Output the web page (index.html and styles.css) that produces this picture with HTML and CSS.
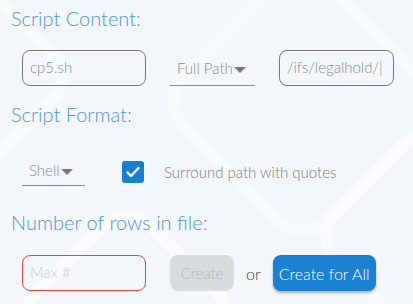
FILE: index.html
```html
<!DOCTYPE html>
<html lang="en">
<head>
    <meta charset="UTF-8">
    <title>Script Options</title>
    <link rel="stylesheet" href="styles.css">
</head>
<body>
    <div class="bg">
        <div class="shape shape-a"></div>
        <div class="shape shape-b"></div>
        <div class="shape shape-c"></div>
        <div class="shape shape-d"></div>
    </div>

    <div class="panel">
        <h2 class="title">Script Content:</h2>
        <div class="row">
            <div class="field">cp5.sh</div>
            <div class="select select-wide">Full Path<span class="caret"></span></div>
            <div class="field field-path">/ifs/legalhold/|</div>
        </div>

        <h2 class="title">Script Format:</h2>
        <div class="row row-format">
            <div class="select select-small">Shell<span class="caret"></span></div>
            <label class="check">
                <span class="box">
                    <svg width="14" height="12" viewBox="0 0 14 12"><path d="M1.5 6.5 L5 10 L12.5 2" fill="none" stroke="#fff" stroke-width="2.2" stroke-linecap="round" stroke-linejoin="round"/></svg>
                </span>
                Surround path with quotes
            </label>
        </div>

        <h2 class="title">Number of rows in file:</h2>
        <div class="row row-rows">
            <div class="field field-error placeholder">Max #</div>
            <button class="btn btn-disabled">Create</button>
            <span class="or">or</span>
            <button class="btn btn-primary">Create for All</button>
        </div>
    </div>
</body>
</html>
```

FILE: styles.css
```css
body {
    margin: 0;
    width: 413px;
    height: 304px;
    overflow: hidden;
    background: #f3f7fb;
    font-family: Lato, "Open Sans", sans-serif;
    position: relative;
}

/* decorative background */
.bg {
    position: absolute;
    inset: 0;
    overflow: hidden;
}
.shape {
    position: absolute;
    border-radius: 40px;
    transform: rotate(45deg);
    border: 12px solid rgba(255, 255, 255, 0.45);
}
.shape-a {
    width: 170px;
    height: 170px;
    left: -150px;
    top: -20px;
}
.shape-b {
    width: 190px;
    height: 190px;
    left: 195px;
    top: -5px;
    border-color: rgba(255, 255, 255, 0.35);
}
.shape-c {
    width: 150px;
    height: 150px;
    left: 40px;
    top: 230px;
    border-color: rgba(255, 255, 255, 0.5);
}
.shape-d {
    width: 150px;
    height: 150px;
    left: 340px;
    top: 150px;
    border-color: rgba(255, 255, 255, 0.35);
}

.panel {
    position: relative;
    padding: 6px 0 0 11px;
}

.title {
    margin: 0;
    font-size: 20px;
    font-weight: 300;
    line-height: 24px;
    color: #4d94d3;
}

.row {
    display: flex;
    align-items: center;
    padding-left: 11px;
    margin: 20px 0 16px;
    height: 36px;
}

.field {
    box-sizing: border-box;
    width: 124px;
    height: 36px;
    border: 1px solid #7a7a7a;
    border-radius: 8px;
    padding: 0 7px;
    font-size: 15px;
    line-height: 33px;
    color: #8a8a8a;
    font-weight: 300;
    white-space: nowrap;
    overflow: hidden;
    background: transparent;
}
.field-path {
    width: 115px;
    margin-left: 24px;
}
.field-error {
    border-color: #e2463a;
}
.placeholder {
    color: #cacaca;
}

.select {
    box-sizing: border-box;
    height: 36px;
    border-bottom: 1px solid #8a8a8a;
    padding: 0 0 0 7px;
    font-size: 15px;
    line-height: 34px;
    color: #8a8a8a;
    font-weight: 300;
    display: flex;
    align-items: center;
}
.select-wide {
    width: 85px;
    margin-left: 24px;
}
.select-small {
    width: 63px;
}
.caret {
    width: 0;
    height: 0;
    border-left: 6px solid transparent;
    border-right: 6px solid transparent;
    border-top: 6px solid #7a7a7a;
    margin: 4px 0 0 1px;
}

.row-format {
    height: 28px;
    margin-top: 32px;
    margin-bottom: 24px;
}
.row-format .select {
    height: 28px;
    align-items: flex-start;
    line-height: 24px;
}
.row-format .caret {
    margin-top: 11px;
}

.row-rows {
    margin-top: 21px;
    margin-bottom: 0;
}

.check {
    display: flex;
    align-items: center;
    margin-left: 37px;
    font-size: 15px;
    font-weight: 300;
    color: #7a7a7a;
}
.box {
    width: 22px;
    height: 22px;
    border-radius: 3px;
    background: #1a7fd0;
    display: flex;
    align-items: center;
    justify-content: center;
    margin-right: 20px;
}

.btn {
    height: 36px;
    border: none;
    border-radius: 8px;
    font-family: inherit;
    font-size: 15px;
    font-weight: 300;
    padding: 0;
    white-space: nowrap;
}
.btn-disabled {
    width: 64px;
    margin-left: 24px;
    background: #d9dcdf;
    color: #b6babd;
}
.or {
    margin: 0 12px;
    font-size: 16px;
    font-weight: 300;
    color: #444;
}
.btn-primary {
    width: 103px;
    font-size: 16px;
    background: #1a80d1;
    color: #fff;
    box-shadow: 0 2px 3px rgba(0, 0, 0, 0.3);
}
```
